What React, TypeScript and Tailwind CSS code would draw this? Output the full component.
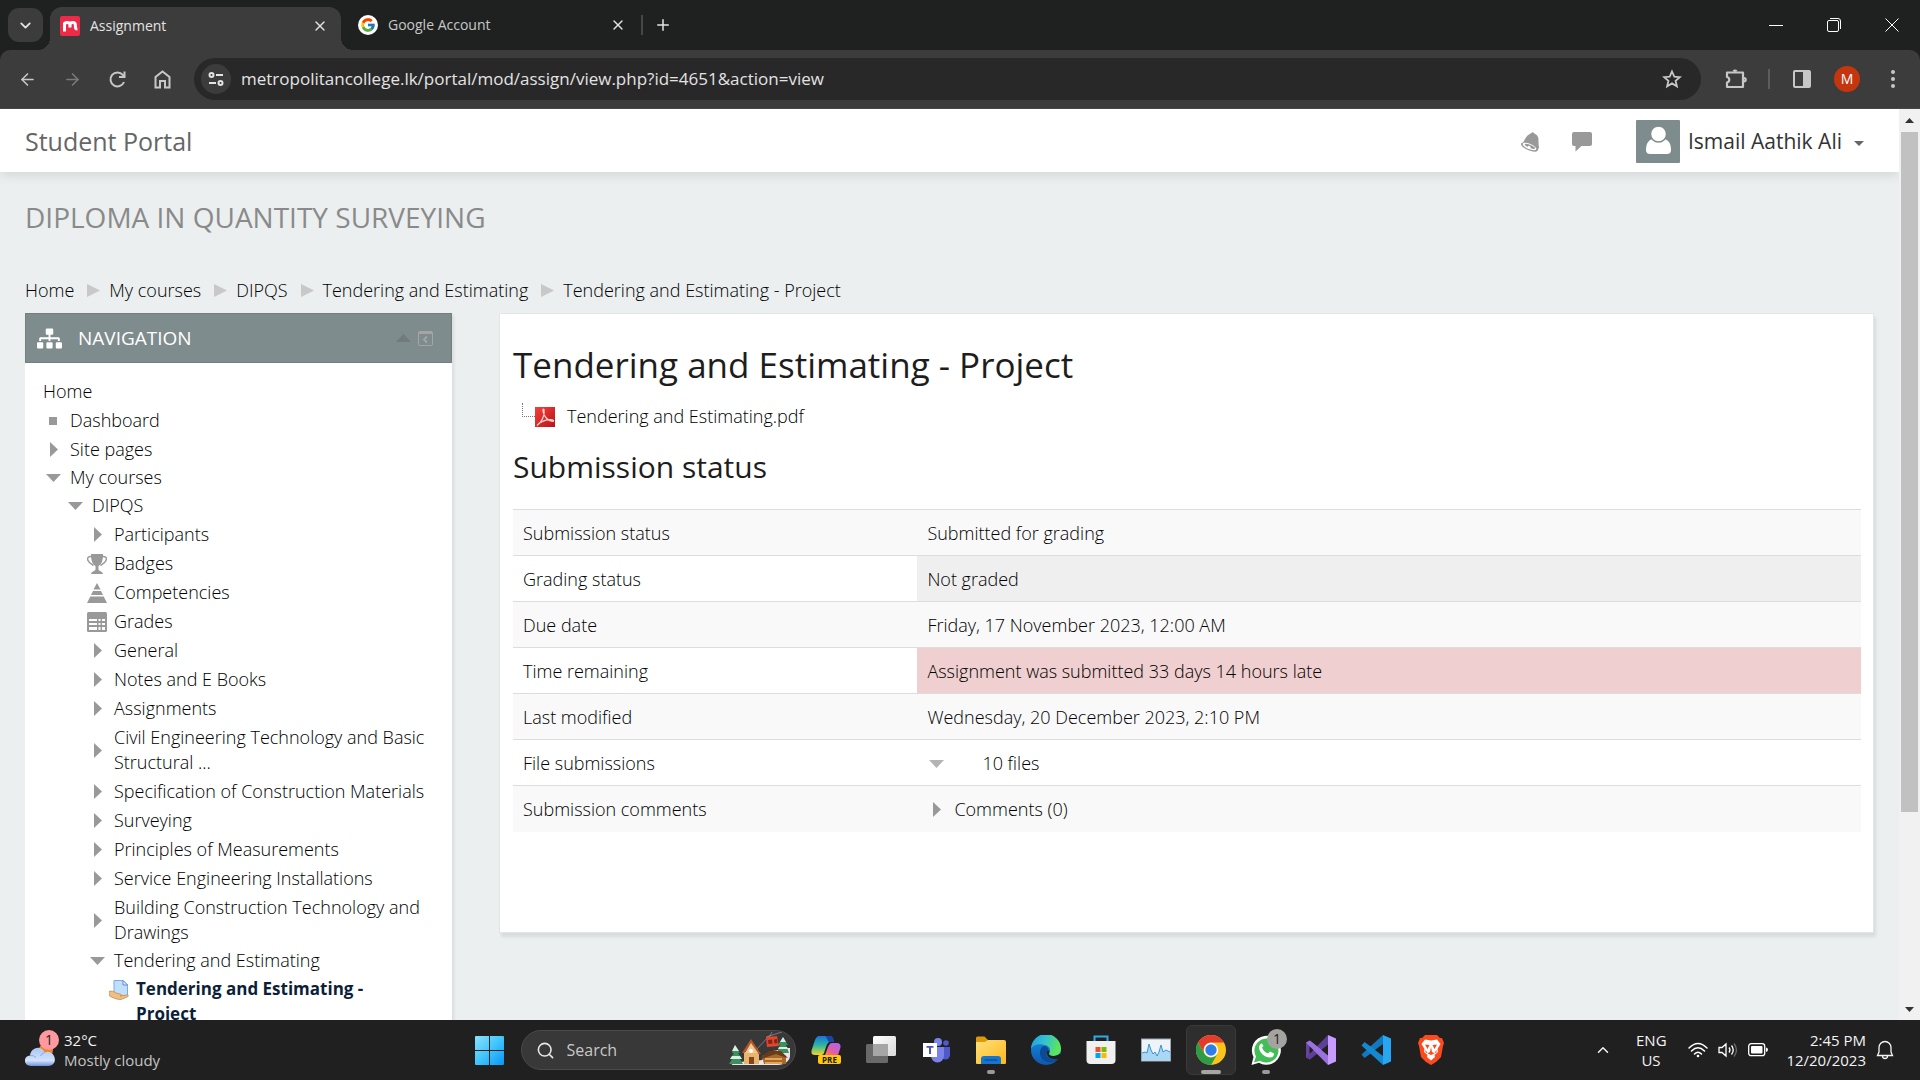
import type { ReactNode } from "react";
import { FaSitemap } from "react-icons/fa";
import { FcGoogle } from "react-icons/fc";
import { ArrowLeft, ArrowRight, ChevronDown, ChevronUp, Plus, Search, X } from "lucide-react";

/* ---------- shared small drawings ---------- */

function Triangle({ dir, className = "" }: { dir: "right" | "down" | "up"; className?: string }) {
  const d = dir === "right" ? "M4 0v15l8-7.500z" : dir === "down" ? "M0 4h15l-7.500 8z" : "M0 11h15L7.500 3z";
  return (
    <svg viewBox="0 0 15 15" className={`block size-[15px] shrink-0 ${className}`} fill="currentColor" aria-hidden="true">
      <path d={d} />
    </svg>
  );
}

/* ---------- browser chrome ---------- */

function CollegeFavicon() {
  return (
    <svg viewBox="0 0 20 20" className="size-5 shrink-0" aria-hidden="true">
      <rect width="20" height="20" rx="2" fill="#ed2a48" />
      <path d="M4.500 15.500V6.500M4.500 9q0-2.500 2.700-2.500T10 9v2.500M10 9q0-2.500 2.700-2.500T15.400 9v2.500q.1 1.500 2 1.500" fill="none" stroke="#fff" strokeWidth="3" />
    </svg>
  );
}

function TabStrip() {
  return (
    <div className="flex h-[50px] items-center bg-[#1f2120] pl-2 text-[#e3e3e3]">
      <button aria-label="Search tabs" className="flex h-[34px] w-[35px] items-center justify-center rounded-[11px] bg-[#3c3c3c]">
        <ChevronDown size={17} strokeWidth={2.5} />
      </button>
      <div className="relative ml-[7px] flex h-[43px] w-[291px] items-center self-end rounded-t-xl bg-[#3c3c3c] pt-0.5 pr-[13px] pb-2 pl-2.5">
        <span className="absolute bottom-0 -left-3 size-3 bg-[radial-gradient(circle_at_0_0,transparent_12px,#3c3c3c_12px)]" />
        <span className="absolute -right-3 bottom-0 size-3 bg-[radial-gradient(circle_at_100%_0,transparent_12px,#3c3c3c_12px)]" />
        <CollegeFavicon />
        <span className="ml-2.5 flex-1 text-sm">Assignment</span>
        <button aria-label="Close Assignment"><X size={16} /></button>
      </div>
      <div className="ml-[17px] flex w-[268px] items-center">
        <span className="flex size-5 items-center justify-center rounded-full bg-white"><FcGoogle size={16} /></span>
        <span className="ml-2.5 flex-1 text-sm text-[#c7c7c7]">Google Account</span>
        <button aria-label="Close Google Account"><X size={16} /></button>
      </div>
      <span className="ml-[15px] h-5 w-0.5 bg-[#464847]" />
      <button aria-label="New tab" className="ml-[11px]"><Plus size={18} /></button>
      <div className="ml-auto flex items-center gap-11 pr-[21px]">
        <button aria-label="Minimize" className="flex h-4 w-[14px] items-center"><span className="h-px w-full bg-white" /></button>
        <button aria-label="Restore">
          <svg viewBox="0 0 14 14" className="size-[14px]" fill="none" stroke="#fff" aria-hidden="true">
            <rect x=".5" y="2.500" width="11" height="11" rx="1.500" />
            <path d="M3 .5h8a2.500 2.500 0 0 1 2.500 2.500v8" />
          </svg>
        </button>
        <button aria-label="Close window">
          <svg viewBox="0 0 14 14" className="size-[14px]" stroke="#fff" aria-hidden="true"><path d="M.5.5l13 13M13.500.5l-13 13" /></svg>
        </button>
      </div>
    </div>
  );
}

function Toolbar() {
  return (
    <div className="bg-[#1f2120]">
      <div className="flex h-[59px] items-center rounded-t-[10px] border-b border-[#4a4647] bg-[#3c3c3c] px-[18px] text-[#c7c7c7]">
        <div className="flex items-center gap-[26px]">
          <button aria-label="Back"><ArrowLeft size={19} /></button>
          <button aria-label="Forward" className="text-[#7b7b7b]"><ArrowRight size={19} /></button>
          <button aria-label="Reload">
            <svg viewBox="0 0 19 19" className="size-[19px]" fill="none" stroke="currentColor" strokeWidth="2" aria-hidden="true">
              <path d="M16 12A7 7 0 1 1 14.800 4.800L16 6.300" />
              <path d="M16.500 1.500v5.500H11" />
            </svg>
          </button>
          <button aria-label="Home">
            <svg viewBox="0 0 19 19" className="size-[19px]" fill="none" stroke="currentColor" strokeWidth="2" aria-hidden="true">
              <path d="M2.500 17.500V7l7-5.500 7 5.500v10.500H12V11H7v6.500z" />
            </svg>
          </button>
        </div>
        <div className="ml-[22px] flex h-[42px] flex-1 items-center rounded-full bg-[#282828] pr-[19px] pl-[7px]">
          <button aria-label="Site information" className="flex size-[30px] items-center justify-center rounded-full bg-[#3c3c3c]">
            <svg viewBox="0 0 16 16" className="size-4" fill="none" stroke="#e3e3e3" strokeWidth="2" aria-hidden="true">
              <circle cx="3.500" cy="4" r="2" /><path d="M8 4h7M1 12h7" /><circle cx="12.500" cy="12" r="2" />
            </svg>
          </button>
          <input
            aria-label="Address"
            className="ml-2.5 min-w-0 flex-1 bg-transparent text-[17px] text-[#e3e3e3] outline-none"
            defaultValue="metropolitancollege.lk/portal/mod/assign/view.php?id=4651&action=view"
          />
          <button aria-label="Bookmark this tab">
            <svg viewBox="0 0 20 20" className="size-5" fill="none" stroke="currentColor" strokeWidth="1.800" aria-hidden="true">
              <path d="M10 2.500l2.300 5.100 5.500.5-4.200 3.700 1.300 5.500-4.900-2.900-4.900 2.900 1.300-5.500L2.200 8.100l5.500-.5z" />
            </svg>
          </button>
        </div>
        <button aria-label="Extensions" className="ml-6">
          <svg viewBox="0 0 22 22" className="size-[22px]" fill="none" stroke="currentColor" strokeWidth="2.200" strokeLinejoin="round" aria-hidden="true">
            <path d="M2 4.500h16v14.500H2v-4.500a2.800 2.800 0 0 0 0-5.500z" />
            <path d="M8.500 3.500a1.700 1.700 0 0 1 3 0M19 10a1.700 1.700 0 0 1 0 3.400" />
          </svg>
        </button>
        <span className="ml-[21px] h-5 w-0.5 bg-[#5c5c5c]" />
        <button aria-label="Side panel" className="ml-[22px]">
          <svg viewBox="0 0 20 20" className="size-5" aria-hidden="true">
            <rect x="2" y="2" width="16" height="16" rx="1" fill="none" stroke="currentColor" strokeWidth="2" />
            <path d="M11 2h7v16h-7z" fill="currentColor" />
          </svg>
        </button>
        <button aria-label="Profile" className="ml-[22px] flex size-[26px] items-center justify-center rounded-full bg-[#c5360e] text-sm text-white">M</button>
        <button aria-label="Browser menu" className="ml-6">
          <svg viewBox="0 0 18 20" className="h-5 w-[18px]" fill="currentColor" aria-hidden="true">
            <circle cx="9" cy="3" r="2" /><circle cx="9" cy="10" r="2" /><circle cx="9" cy="17" r="2" />
          </svg>
        </button>
      </div>
    </div>
  );
}

/* ---------- portal page ---------- */

function PortalHeader() {
  return (
    <header className="relative flex h-[63px] shrink-0 items-center bg-white pt-0.5 pr-[35px] pl-[25px] font-normal shadow-[0_2px_12px_rgba(0,0,0,0.12)]">
      <a href="#portal" className="text-[25px] text-[#666]">Student Portal</a>
      <button aria-label="Notifications" className="ml-auto">
        <svg viewBox="0 0 20 20" className="size-5" fill="#999" aria-hidden="true">
          <path d="M9 2.500 13 0l1.200 1.500c3 1 4.500 3.500 4.300 6.500-.1 3 .1 5 .5 7.500l-1.500 3.500c-2 1.500-6.500.5-10.500-1.500S.5 13 1 11.500L3.500 10C5 7.500 6 4 9 2.500z" />
          <ellipse cx="9.500" cy="14.500" rx="7.300" ry="2.600" transform="rotate(22 9.500 14.500)" fill="#fff" />
          <ellipse cx="10" cy="14.300" rx="5.500" ry="1.500" transform="rotate(22 10 14.300)" />
          <circle cx="9" cy="15.300" r="1.500" fill="#fff" />
        </svg>
      </button>
      <button aria-label="Messages" className="ml-8">
        <svg viewBox="0 0 20 20" className="size-5" fill="#999" aria-hidden="true">
          <path d="M2 0h16a2 2 0 0 1 2 2v10a2 2 0 0 1-2 2H9.500L3.500 19.500V14H2a2 2 0 0 1-2-2V2a2 2 0 0 1 2-2z" />
        </svg>
      </button>
      <button className="ml-11 flex items-center text-[21px] text-[#333]">
        <svg viewBox="0 0 44 43" className="h-[43px] w-11" aria-hidden="true">
          <rect width="44" height="43" rx="1" fill="#7f8c8d" />
          <path d="M10 30c0-7 3-11 8-11h9c5 0 8 4 8 11 0 3-2 4-4 4H14c-2 0-4-1-4-4z" fill="#fff" />
          <circle cx="22.500" cy="14" r="8" fill="#fff" stroke="#7f8c8d" strokeWidth="1.500" />
        </svg>
        <span className="ml-2">Ismail Aathik Ali</span>
        <svg viewBox="0 0 10 5" className="mt-1 ml-3 h-[5px] w-2.5" fill="#666" aria-hidden="true"><path d="M0 0h10L5 5z" /></svg>
      </button>
    </header>
  );
}

const crumbs = ["Home", "My courses", "DIPQS", "Tendering and Estimating", "Tendering and Estimating - Project"];

function Breadcrumb() {
  return (
    <nav aria-label="Breadcrumb" className="mt-[41px]">
      <ol className="flex items-center text-lg leading-6 text-black">
        {crumbs.map((c, i) => (
          <li key={c} className="flex items-center">
            {i > 0 && (
              <svg viewBox="0 0 13 13" className="mr-[9px] ml-[13px] size-[13px]" fill="#c8c8c8" aria-hidden="true"><path d="M0 0l13 6.500L0 13z" /></svg>
            )}
            <a href="#crumb">{c}</a>
          </li>
        ))}
      </ol>
    </nav>
  );
}

type Kind = "closed" | "open" | "leaf" | "badge" | "comp" | "grades" | "assign";
type Node = { label: string; kind: Kind; children?: Node[] };

const tree: Node[] = [
  { label: "Dashboard", kind: "leaf" },
  { label: "Site pages", kind: "closed" },
  {
    label: "My courses",
    kind: "open",
    children: [
      {
        label: "DIPQS",
        kind: "open",
        children: [
          { label: "Participants", kind: "closed" },
          { label: "Badges", kind: "badge" },
          { label: "Competencies", kind: "comp" },
          { label: "Grades", kind: "grades" },
          { label: "General", kind: "closed" },
          { label: "Notes and E Books", kind: "closed" },
          { label: "Assignments", kind: "closed" },
          { label: "Civil Engineering Technology and Basic Structural ...", kind: "closed" },
          { label: "Specification of Construction Materials", kind: "closed" },
          { label: "Surveying", kind: "closed" },
          { label: "Principles of Measurements", kind: "closed" },
          { label: "Service Engineering Installations", kind: "closed" },
          { label: "Building Construction Technology and Drawings", kind: "closed" },
          {
            label: "Tendering and Estimating",
            kind: "open",
            children: [{ label: "Tendering and Estimating - Project", kind: "assign" }],
          },
        ],
      },
    ],
  },
];

function KindIcon({ kind }: { kind: Kind }) {
  if (kind === "closed") return <Triangle dir="right" />;
  if (kind === "open") return <Triangle dir="down" />;
  if (kind === "leaf") return <span className="size-2 bg-[#999]" />;
  if (kind === "badge")
    return (
      <svg viewBox="0 0 20 20" className="size-5" aria-hidden="true">
        <path d="M4 0h12c0 6-1 10-4.500 12v3.500c0 1.500 4 1.500 4.500 4.500H4c.5-3 4.500-3 4.500-4.500V12C5 10 4 6 4 0z" fill="currentColor" />
        <path d="M5 2.500C1 2 0 4 1 6.500S4 10 6.500 11.500M15 2.500c4-.5 5 1.500 4 4s-3 3.500-5.500 5" fill="none" stroke="currentColor" strokeWidth="1.500" />
      </svg>
    );
  if (kind === "comp")
    return (
      <svg viewBox="0 0 20 20" className="size-5" fill="currentColor" aria-hidden="true">
        <path d="M10 0l3.500 6.500h-7zM6 8h8l2 4H4zM3.300 13.500h13.400L20 20H0z" />
      </svg>
    );
  if (kind === "grades")
    return (
      <svg viewBox="0 0 20 20" className="size-5" aria-hidden="true">
        <rect width="20" height="20" rx="1.500" fill="currentColor" />
        <path d="M2 7h8v2H2zM2 11h8v2H2zM2 15h8v3H2zM11.500 7h2v2h-2zM15 7h3v2h-3zM11.500 11h2v2h-2zM15 11h3v2h-3zM11.500 15h2v3h-2zM15 15h3v3h-3z" fill="#fff" />
      </svg>
    );
  return (
    <svg viewBox="0 0 20 20" className="size-5" aria-hidden="true">
      <path d="M5 .5h9l4.500 4.500v11H5z" fill="#bfe0fb" stroke="#7fa9e6" />
      <path d="M14 .5V5h4.500z" fill="#eef7ff" stroke="#5c86d6" />
      <path d="M0 11.500c2-1 5 0 7 1.500l4 1c2 .5 2 2 0 2l6.500-1c2-.3 2.500 1 1 1.800L12 19.500c-5 0-9-2-12-4z" fill="#efbe85" stroke="#c98b49" strokeWidth=".8" />
    </svg>
  );
}

function TreeItems({ nodes, nested = false }: { nodes: Node[]; nested?: boolean }) {
  return (
    <ul className={nested ? "pl-[22px]" : ""}>
      {nodes.map((n) => (
        <li key={n.label}>
          <div className={`flex items-center ${n.kind === "open" || n.kind === "assign" ? "pt-[3px]" : "pt-1"}`}>
            <span className={`flex w-5 shrink-0 justify-center text-[#999] ${n.kind === "assign" ? "self-start pt-1" : ""}`}>
              <KindIcon kind={n.kind} />
            </span>
            <a href="#node" className={`ml-[7px] ${n.kind === "assign" ? "text-[17px] font-bold leading-[25px] text-[#0c1f38]" : ""}`}>{n.label}</a>
          </div>
          {n.children && <TreeItems nodes={n.children} nested />}
        </li>
      ))}
    </ul>
  );
}

function NavigationBlock() {
  return (
    <aside className="w-[427px] shrink-0 bg-white shadow-[2px_2px_3px_rgba(0,0,0,0.08)]">
      <div className="flex h-[50px] items-center border border-[#738080] bg-[#7f8c8d] pr-[18px] pl-[11px]">
        <FaSitemap size={25} color="#fff" aria-hidden="true" />
        <h2 className="ml-4 flex-1 text-[19px] font-normal text-white">NAVIGATION</h2>
        <button aria-label="Hide Navigation block" className="text-[#717b7b]"><Triangle dir="up" /></button>
        <button aria-label="Dock Navigation block" className="ml-[7px]">
          <svg viewBox="0 0 15 15" className="size-[15px]" fill="none" stroke="#a5a5a5" aria-hidden="true">
            <rect x=".5" y=".5" width="14" height="14" rx="1" />
            <path d="M1 1.500h13M1 2.500h13" />
            <path d="M9 5.500 6 8.500l3 3" strokeWidth="1.800" />
          </svg>
        </button>
      </div>
      <nav aria-label="Navigation" className="pt-4 pr-[26px] pb-4 pl-[18px] text-lg leading-[25px] text-black">
        <a href="#home">Home</a>
        <TreeItems nodes={tree} />
      </nav>
    </aside>
  );
}

type Row = { label: string; value: ReactNode; tone?: "gray" | "red" };

const rows: Row[] = [
  { label: "Submission status", value: "Submitted for grading" },
  { label: "Grading status", value: "Not graded", tone: "gray" },
  { label: "Due date", value: "Friday, 17 November 2023, 12:00 AM" },
  { label: "Time remaining", value: "Assignment was submitted 33 days 14 hours late", tone: "red" },
  { label: "Last modified", value: "Wednesday, 20 December 2023, 2:10 PM" },
  {
    label: "File submissions",
    value: (
      <button className="flex items-center">
        <Triangle dir="down" className="mt-0.5 ml-0.5 text-[#b4b4b4]" />
        <span className="ml-[38px]">10 files</span>
      </button>
    ),
  },
  {
    label: "Submission comments",
    value: (
      <button className="flex items-center">
        <Triangle dir="right" className="mt-0.5 ml-0.5 text-[#999]" />
        <span className="ml-2.5">Comments (0)</span>
      </button>
    ),
  },
];

function AssignmentPanel() {
  return (
    <main className="h-[620px] min-w-0 flex-1 border border-[#e3e6e6] bg-white pr-3 pl-[13px] text-black shadow-[2px_4px_3px_rgba(0,0,0,0.08)]">
      <h1 className="mt-7 text-[35px] leading-[46px] font-normal text-[#1d1d1d]">Tendering and Estimating - Project</h1>
      <a href="#pdf" className="mt-[15px] flex items-center pl-[9px] text-lg leading-6 text-black">
        <span className="mb-3 h-[14px] w-[13px] border-b border-l border-dotted border-[#777]" />
        <svg viewBox="0 0 20 20" className="mt-0.5 size-5" aria-hidden="true">
          <defs><linearGradient id="pdf" x1="0" y1="0" x2="1" y2="1"><stop offset="0" stopColor="#f5413a" /><stop offset="1" stopColor="#b9141b" /></linearGradient></defs>
          <rect width="20" height="20" fill="url(#pdf)" />
          <path d="M2 18.500C7 15 10 8 9 2.500 8 1 7.500 3 8.500 6c1.500 4.500 5 8 9.500 8.500 1.500-.5 0-2-3-1.800C10 13 5 15 2 18.500z" fill="none" stroke="#fbd5d2" strokeWidth="1.200" />
        </svg>
        <span className="ml-3">Tendering and Estimating.pdf</span>
      </a>
      <h2 className="mt-[18px] text-[30px] leading-[40px] font-normal text-[#1d1d1d]">Submission status</h2>
      <table className="mt-[22px] w-full table-fixed border-collapse text-left text-lg leading-6">
        <colgroup><col className="w-[30%]" /><col /></colgroup>
        <tbody>
          {rows.map((r, i) => (
            <tr key={r.label} className={`h-[46px] border-t border-[#ddd] ${i % 2 === 0 ? "bg-[#f9f9f9]" : ""}`}>
              <th scope="row" className="px-2.5 font-light">{r.label}</th>
              <td className={`px-2.5 ${r.tone === "gray" ? "bg-[#efefef]" : r.tone === "red" ? "bg-[#efcfcf]" : ""}`}>{r.value}</td>
            </tr>
          ))}
        </tbody>
      </table>
    </main>
  );
}

function Scrollbar() {
  return (
    <div aria-hidden="true" className="flex w-[21px] shrink-0 flex-col items-center bg-[#f1f1f1]">
      <svg viewBox="0 0 21 23" className="h-[23px] w-[21px] shrink-0" fill="#333"><path d="M6 14h9l-4.500-5z" /></svg>
      <div className="h-[680px] w-[17px] bg-[#c1c1c1]" />
      <svg viewBox="0 0 21 22" className="mt-auto h-[22px] w-[21px] shrink-0" fill="#333"><path d="M6 9h9l-4.500 5z" /></svg>
    </div>
  );
}

/* ---------- taskbar ---------- */

function WeatherIcon() {
  return (
    <svg viewBox="0 0 36 38" className="h-[38px] w-9" aria-hidden="true">
      <defs><linearGradient id="cloud" x1="0" y1="0" x2="0" y2="1"><stop offset="0" stopColor="#a9c6f5" /><stop offset=".7" stopColor="#d3e2fb" /><stop offset="1" stopColor="#6d93dc" /></linearGradient></defs>
      <circle cx="21" cy="19" r="7" fill="#f58220" />
      <path d="M6 35C-2 35-2 25 5 24.500 6 16 17 14 19.500 21.500 27 18 32 27 29 32q-2 3-6 3z" fill="url(#cloud)" />
      <path d="M5 24.500q4-.5 6 2M19.500 21.500q-3 1-4 3.500" fill="none" stroke="#88a9e6" />
    </svg>
  );
}

function VillageArt() {
  return (
    <svg viewBox="0 0 64 36" className="h-9 w-16" aria-hidden="true">
      <path d="M4 32c12-4 20-2 30-4 6-5 16-13 28-12v8c0 5-6 9-12 9H8c-3 0-5 0-4-1z" fill="#e9e4ea" />
      <path d="M28 18 42 3M38 5 54 0M41 6 44 0" stroke="#8b8b92" strokeWidth=".8" />
      <path d="M38 5l11-1 2 10-12 1z" fill="#e2452c" /><path d="M40 8l4-.5.500 4-4 .5zM46 7.500l3-.5.500 4-3 .5z" fill="#7d2318" />
      <path d="M7 13l5 8h-2l4 6h-2l3 5H1l3-5H2l4-6H4z" fill="#3d8f62" /><path d="M7 13l4 6H4zM4 24h8l2 3H2z" fill="#d7efe3" />
      <path d="M55 5l5 8h-2l3 8H49l3-8h-2z" fill="#3d8f62" /><path d="M55 5l3 5h-6zM51 15h8l1 2H50z" fill="#d7efe3" />
      <path d="M16 20h15v12H16z" fill="#e7b56b" /><path d="M23 7 14 21h2.500L23 12l7.500 10H33z" fill="#b4562c" /><path d="M23 11l7 10H17z" fill="#f1c98c" />
      <circle cx="23" cy="19" r="2" fill="#fff" /><path d="M21 25h5v7h-5z" fill="#874222" />
      <path d="M34 24l13-6 11 6v8H36z" fill="#a9682b" /><path d="M32 26l9-7h12l7 7-4-1-8-3-12 4z" fill="#6b3a1b" /><path d="M37 26h17v2H37zM37 30h17v2H37z" fill="#e2a65a" />
    </svg>
  );
}

function Slot({ label, children, active = false, dot = false }: { label: string; children: ReactNode; active?: boolean; dot?: boolean }) {
  return (
    <div className="flex h-full w-[55px] shrink-0 items-center justify-center">
      <button
        aria-label={label}
        className={`relative flex size-[50px] items-center justify-center rounded-md ${active ? "border border-[#3a3a3a] bg-[#2e2e2e]" : ""}`}
      >
        {children}
        {dot && <span className="absolute bottom-px left-[21px] h-1 w-2 rounded-full bg-[#9a9a9a]" />}
        {active && <span className="absolute bottom-0 left-[14px] h-1 w-5 rounded-full bg-[#a8a6a2]" />}
      </button>
    </div>
  );
}

const art = "size-[30px]";

function TaskbarApps() {
  return (
    <>
      <Slot label="Copilot">
        <svg viewBox="0 0 30 30" className={art} aria-hidden="true">
          <defs>
            <linearGradient id="cpA" x1="0" y1="0" x2="0" y2="1"><stop offset="0" stopColor="#1f6fe0" /><stop offset=".5" stopColor="#2bb9a0" /><stop offset="1" stopColor="#f5d429" /></linearGradient>
            <linearGradient id="cpB" x1="1" y1="0" x2="0" y2="1"><stop offset="0" stopColor="#a06af5" /><stop offset=".6" stopColor="#e35cab" /><stop offset="1" stopColor="#f9803f" /></linearGradient>
          </defs>
          <path d="M8 1h11c3 0 3 3 4 6h-4c-2 0-3 2-4 5l-2 6c-1 2-2 2-4 2H4c-4 0-4-3-3-6L4 5c1-2 2-4 4-4z" fill="url(#cpA)" />
          <path d="M14 1h5c3 0 3 3 4 6h-4c-3 0-3-6-5-6z" fill="#1746a8" />
          <path d="M21 8h5c4 0 4 4 3 6l-2 6H14l3-8c1-2 2-4 4-4z" fill="url(#cpB)" />
          <rect x="7" y="20" width="23" height="9" rx="2" fill="#ffc70f" />
          <text x="18.500" y="27.500" textAnchor="middle" fontSize="8" fontWeight="700" fill="#1a1a1a" fontFamily="Open Sans, sans-serif">PRE</text>
        </svg>
      </Slot>
      <Slot label="Task view">
        <svg viewBox="0 0 30 30" className={art} aria-hidden="true">
          <defs><linearGradient id="tv" x1="0" y1="0" x2="1" y2="1"><stop offset="0" stopColor="#fff" /><stop offset="1" stopColor="#d9d9d9" /></linearGradient></defs>
          <rect x="7" y="1" width="23" height="20" rx="1.500" fill="url(#tv)" />
          <rect x="0" y="9" width="22" height="19" rx="1.500" fill="#777" fillOpacity=".85" />
          <path d="M7 9h15v12H7z" fill="#a6a6a6" />
        </svg>
      </Slot>
      <Slot label="Teams">
        <svg viewBox="0 0 30 30" className={art} aria-hidden="true">
          <circle cx="17" cy="7" r="4" fill="#7b83eb" /><circle cx="25" cy="8" r="2.800" fill="#5059c9" />
          <path d="M20 12h9v8a4.500 4.500 0 0 1-9 0z" fill="#5059c9" />
          <path d="M10 12h13v9a6.500 6.500 0 0 1-13 0z" fill="#7b83eb" />
          <rect x="2" y="8" width="14" height="14" fill="#fff" />
          <path d="M5.500 11h7v1.800h-2.500V19H8v-6.200H5.500z" fill="#4b53bc" />
        </svg>
      </Slot>
      <Slot label="File Explorer" dot>
        <svg viewBox="0 0 30 30" className={art} aria-hidden="true">
          <defs><linearGradient id="fe" x1="0" y1="0" x2="1" y2="1"><stop offset="0" stopColor="#ffe07a" /><stop offset="1" stopColor="#fcb81c" /></linearGradient></defs>
          <path d="M0 3q0-1.500 1.500-1.500h7L12 5h4v4H0z" fill="#dc9a0b" />
          <path d="M0 7h9l3-2h16q2 0 2 2v21q0 1-1 1H1q-1 0-1-1z" fill="url(#fe)" />
          <path d="M5 29v-5q0-3 3-3h14q3 0 3 3v5z" fill="#1675cf" /><path d="M8.500 25h13" stroke="#0b4a8e" strokeWidth="1.200" />
        </svg>
      </Slot>
      <Slot label="Edge">
        <svg viewBox="0 0 30 30" className={art} aria-hidden="true">
          <defs>
            <linearGradient id="edA" x1="0" y1="0" x2="1" y2=".3"><stop offset="0" stopColor="#1b9de2" /><stop offset=".5" stopColor="#35c1d2" /><stop offset="1" stopColor="#5be55a" /></linearGradient>
            <linearGradient id="edB" x1="0" y1="0" x2="0" y2="1"><stop offset="0" stopColor="#1591df" /><stop offset="1" stopColor="#0f57b0" /></linearGradient>
          </defs>
          <circle cx="15" cy="15" r="15" fill="url(#edB)" />
          <path d="M0 14A15 15 0 0 1 30 14c0 5-4 7-8 7-3 0-5-1-4-3 2-3 1-7-4-8C8 8 2 10 0 14z" fill="url(#edA)" />
          <path d="M11 12c-4 5-2 13 5 15 4 1 8 0 11-3-3 1-7 1-9-1-4-3-2-5-1-6 2-4-3-8-6-5z" fill="#0c4a94" />
          <path d="M18.500 17c-1 2-.5 4 4 4 3 0 5-1 6.500-2.500l2 3-4 2.500c-7 1-11-2-11-6 0-3 2.500-3 2.500-1z" fill="#202020" />
        </svg>
      </Slot>
      <Slot label="Microsoft Store">
        <svg viewBox="0 0 30 30" className={art} aria-hidden="true">
          <path d="M8.500 7V1.500h13V7" fill="none" stroke="#2fa9ea" strokeWidth="2" />
          <path d="M.5 6h29v19q0 4-4 4h-21q-4 0-4-4z" fill="#f0f0f0" />
          <path d="M9.500 12h5v5h-5z" fill="#f25022" /><path d="M15.500 12h5v5h-5z" fill="#7fba00" /><path d="M9.500 18h5v5h-5z" fill="#00a4ef" /><path d="M15.500 18h5v5h-5z" fill="#ffb900" />
        </svg>
      </Slot>
      <Slot label="Task Manager">
        <svg viewBox="0 0 30 30" className={art} aria-hidden="true">
          <rect x=".5" y="4" width="29" height="22" fill="#eef3f7" stroke="#9aa7b5" />
          <path d="M1 18l3-1 2 1 2-9 2 6 2 4 2-2 2 4 2-4 2-7 2 7 3-2 4 2v8H1z" fill="#a8d8f5" />
          <path d="M1 18l3-1 2 1 2-9 2 6 2 4 2-2 2 4 2-4 2-7 2 7 3-2 4 2" fill="none" stroke="#3b93d0" />
        </svg>
      </Slot>
      <Slot label="Google Chrome" active>
        <svg viewBox="0 0 30 30" className={art} aria-hidden="true">
          <circle cx="15" cy="15" r="15" fill="#fbc31c" />
          <path d="M15 0A15 15 0 0 1 28 7.500H15a7.500 7.500 0 0 0-6.500 11.200L2 7.500A15 15 0 0 1 15 0z" fill="#e33b2e" />
          <path d="M2 7.500 8.500 18.700A7.500 7.500 0 0 0 21.500 18.700L15 30A15 15 0 0 1 2 7.500z" fill="#2c9c46" />
          <circle cx="15" cy="15" r="7.200" fill="#fff" /><circle cx="15" cy="15" r="5.700" fill="#2f7de9" />
        </svg>
      </Slot>
      <Slot label="WhatsApp" dot>
        <svg viewBox="0 0 30 30" className={art} aria-hidden="true">
          <path d="M.5 30 2.500 22A14.500 14.500 0 1 1 8 27.800z" fill="#fff" />
          <path d="M3 27.500 5 21.500A12 12 0 1 1 9 25.700z" fill="#43bd55" />
          <path d="M11 8.500c-1 0-3 1.500-3 4 0 5 6 10 11 10 3 0 4.200-2 4-4l-4-2-2 2c-3-1-5-3-6-6l1.500-1.500z" fill="#fff" />
        </svg>
        <span className="absolute top-1 right-1 flex size-5 items-center justify-center rounded-full bg-[#a5a3a0] text-sm leading-5 text-[#222]">1</span>
      </Slot>
      <Slot label="Visual Studio">
        <svg viewBox="0 0 30 30" className={art} aria-hidden="true">
          <path d="M0 7.500 4 5.500v19L0 22.500z" fill="#6544a0" />
          <path d="M4 24.500 0 22.500 22 0v10z" fill="#5d3f96" />
          <path d="M3.500 11.500 7 15l-3.500 3.500z" fill="#202020" />
          <path d="M0 7.500 4 5.500 22 20v10z" fill="#9b72dd" />
          <path d="M22 0l8 3.500v23L22 30z" fill="#c79bff" />
          <path d="M22 9.500v11L15.500 15z" fill="#202020" />
        </svg>
      </Slot>
      <Slot label="Visual Studio Code">
        <svg viewBox="0 0 30 30" className={art} aria-hidden="true">
          <path d="M.5 19.500 22 0v9.500L3.500 23z" fill="#1279bf" /><path d="M.5 10.500 3.500 7 22 20.500V30z" fill="#1488d0" />
          <path d="M22 0l8 3.500v23L22 30z" fill="#27a6f2" /><path d="M22 9v12l-8-6z" fill="#202020" />
        </svg>
      </Slot>
      <Slot label="Brave">
        <svg viewBox="0 0 26 30" className="h-[30px] w-[26px]" aria-hidden="true">
          <path d="M7 0h12l3 3h2l2 5-1 3-2 11-5 5-5 3-5-3-5-5L1 11 0 8l2-5h2z" fill="#fb4a1e" />
          <path d="M13 5.500 19 4.500l3.500 4.500-3 5 .5 3-3.500 3 .5 2-4 3.500L9 22l.5-2L6 17l.5-3-3-5L7 4.500z" fill="#fff" />
          <path d="M7 9.500l4.500.5-2 4zM19 9.500l-4.500.5 2 4zM13 12l1 5 2.500 1.500L13 20l-3.500-1.500L12 17zM7.500 15l2 3-2-.5zM18.500 15l-2 3 2-.5z" fill="#fb4a1e" />
        </svg>
      </Slot>
    </>
  );
}

function Taskbar() {
  return (
    <footer className="grid h-[60px] shrink-0 grid-cols-[1fr_auto_1fr] items-center bg-[#202020] text-[15px] leading-5 text-[#f3f3f3]">
      <button className="relative flex items-center pl-[25px] text-left">
        <WeatherIcon />
        <span className="absolute top-0 left-[39px] flex size-5 items-center justify-center rounded-full bg-[#fe99a0] text-sm text-[#222]">1</span>
        <span className="ml-[3px]">
          <span className="block">32°C</span>
          <span className="block text-[#c4c4c4]">Mostly cloudy</span>
        </span>
      </button>
      <div className="flex h-full items-center">
        <Slot label="Start">
          <svg viewBox="0 0 29 29" className="size-[29px]" aria-hidden="true">
            <defs><linearGradient id="win" x1="0" y1="0" x2="1" y2="1"><stop offset="0" stopColor="#8be2fc" /><stop offset=".5" stopColor="#41c5fb" /><stop offset="1" stopColor="#0a95f8" /></linearGradient></defs>
            <path d="M0 1q0-1 1-1h13v14H0zM15 0h13q1 0 1 1v13H15zM0 15h14v14H1q-1 0-1-1zM15 15h14v13q0 1-1 1H15z" fill="url(#win)" />
          </svg>
        </Slot>
        <label className="mr-[3px] ml-1 flex h-10 w-[275px] items-center rounded-full border border-[#4a4a4a] bg-[#383838] pr-[3px] pl-3.5">
          <Search size={19} color="#e8e8e8" aria-hidden="true" />
          <input aria-label="Search" placeholder="Search" className="ml-3 min-w-0 flex-1 bg-transparent text-base text-white outline-none placeholder:text-[#c8c8c8]" />
          <VillageArt />
        </label>
        <TaskbarApps />
      </div>
      <div className="flex items-center justify-end pr-[26px]">
        <button aria-label="Show hidden icons"><ChevronUp size={18} /></button>
        <button className="ml-6 w-[30px] text-center">ENG US</button>
        <button aria-label="Network, sound and battery" className="ml-[22px] flex items-center gap-2.5">
          <svg viewBox="0 0 20 16" className="h-4 w-5" fill="none" stroke="#fff" strokeWidth="1.500" strokeLinecap="round" aria-hidden="true">
            <path d="M1 6q9-9 18 0M3.500 9q6.500-6.500 13 0M6.500 12q3.500-3.500 7 0" /><circle cx="10" cy="14" r="1.300" fill="#fff" stroke="none" />
          </svg>
          <svg viewBox="0 0 20 16" className="h-4 w-5" fill="none" stroke="#fff" strokeWidth="1.300" aria-hidden="true">
            <path d="M1 5.500h3L8 2v12l-4-3.500H1zM11 5.500q2 2.500 0 5M13.500 3.500q3.500 4.500 0 9" /><path d="M16 1.500q5 6.500 0 13" stroke="#6a6a6a" />
          </svg>
          <svg viewBox="0 0 20 14" className="h-3.5 w-5" aria-hidden="true">
            <rect x=".7" y=".7" width="16" height="12" rx="2.500" fill="none" stroke="#fff" strokeWidth="1.300" /><rect x="3" y="3" width="11.500" height="7.500" rx="1" fill="#fff" /><path d="M18 4.500q2 .5 2 2.200t-2 2.300z" fill="#fff" />
          </svg>
        </button>
        <button className="ml-4 w-[82px] text-right"><span className="block">2:45 PM</span><span className="block">12/20/2023</span></button>
        <button aria-label="Notifications" className="ml-2.5">
          <svg viewBox="0 0 18 20" className="h-5 w-[18px]" fill="none" stroke="#f3f3f3" strokeWidth="1.300" aria-hidden="true">
            <path d="M1.500 15.500 3 12V7.500a6 6 0 0 1 12 0V12l1.500 3.500zM6.500 16a2.500 2.500 0 0 0 5 0" />
          </svg>
        </button>
      </div>
    </footer>
  );
}

export default function App() {
  return (
    <div className="flex h-screen flex-col overflow-hidden font-['Open_Sans',sans-serif]">
      <TabStrip />
      <Toolbar />
      <div className="flex min-h-0 flex-1 bg-[#ebeff0] font-light">
        <div className="flex min-w-0 flex-1 flex-col overflow-hidden">
          <PortalHeader />
          <div className="px-[25px]">
            <p className="mt-[25px] text-[28px] leading-10 font-normal text-[#8a8a8a]">DIPLOMA IN QUANTITY SURVEYING</p>
            <Breadcrumb />
            <div className="mt-[11px] flex items-start gap-[47px]">
              <NavigationBlock />
              <AssignmentPanel />
            </div>
          </div>
        </div>
        <Scrollbar />
      </div>
      <Taskbar />
    </div>
  );
}
